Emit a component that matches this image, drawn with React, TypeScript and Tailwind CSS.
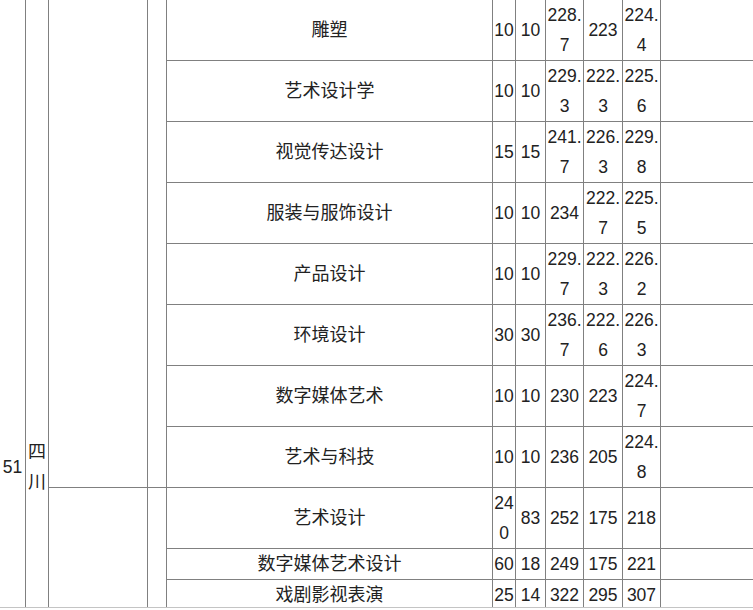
const rows: [string, string, string, string, string, string][] = [
  ["雕塑", "10", "10", "228.7", "223", "224.4"],
  ["艺术设计学", "10", "10", "229.3", "222.3", "225.6"],
  ["视觉传达设计", "15", "15", "241.7", "226.3", "229.8"],
  ["服装与服饰设计", "10", "10", "234", "222.7", "225.5"],
  ["产品设计", "10", "10", "229.7", "222.3", "226.2"],
  ["环境设计", "30", "30", "236.7", "222.6", "226.3"],
  ["数字媒体艺术", "10", "10", "230", "223", "224.7"],
  ["艺术与科技", "10", "10", "236", "205", "224.8"],
  ["艺术设计", "240", "83", "252", "175", "218"],
  ["数字媒体艺术设计", "60", "18", "249", "175", "221"],
  ["戏剧影视表演", "25", "14", "322", "295", "307"],
];

const cell = "border-r border-b border-[#808080]";
const num = `${cell} flex items-center justify-center text-center break-all text-[17.5px] leading-[30px]`;

export default function App() {
  return (
    <div className="h-[608px] w-[753px] overflow-hidden border-b border-[#c4c4c4] bg-white font-['Liberation_Sans','Noto_Sans_CJK_SC',sans-serif] text-[#222]">
      <div className="grid grid-cols-[26px_23px_99px_19px_326px_23px_30px_38px_39px_38px_92px] grid-rows-[repeat(9,61px)_31px_31px]">
        <div className="col-start-1 row-start-1 row-end-12 border-r border-[#808080] pt-[452px] text-center text-[17.5px] leading-[30px]">
          51
        </div>
        <div className="col-start-2 row-start-1 row-end-12 border-r border-[#808080] pt-[437px] text-center text-[18px] leading-[30px]">
          四川
        </div>
        <div className={`col-start-3 row-start-1 row-end-9 ${cell}`} />
        <div className={`col-start-4 row-start-1 row-end-9 ${cell}`} />
        <div className={`col-start-3 row-start-9 row-end-12 ${cell}`} />
        <div className={`col-start-4 row-start-9 row-end-12 ${cell}`} />

        {rows.map((r) => (
          <Row key={r[0]} data={r} />
        ))}
      </div>
    </div>
  );
}

function Row({ data }: { data: [string, string, string, string, string, string] }) {
  const [name, a, b, c, d, e] = data;
  return (
    <>
      <div className={`${cell} flex items-center justify-center text-[18px] leading-[30px]`}>{name}</div>
      <div className={num}>{a}</div>
      <div className={num}>{b}</div>
      <div className={num}>{c}</div>
      <div className={num}>{d}</div>
      <div className={num}>{e}</div>
      <div className="border-b border-[#808080]" />
    </>
  );
}
